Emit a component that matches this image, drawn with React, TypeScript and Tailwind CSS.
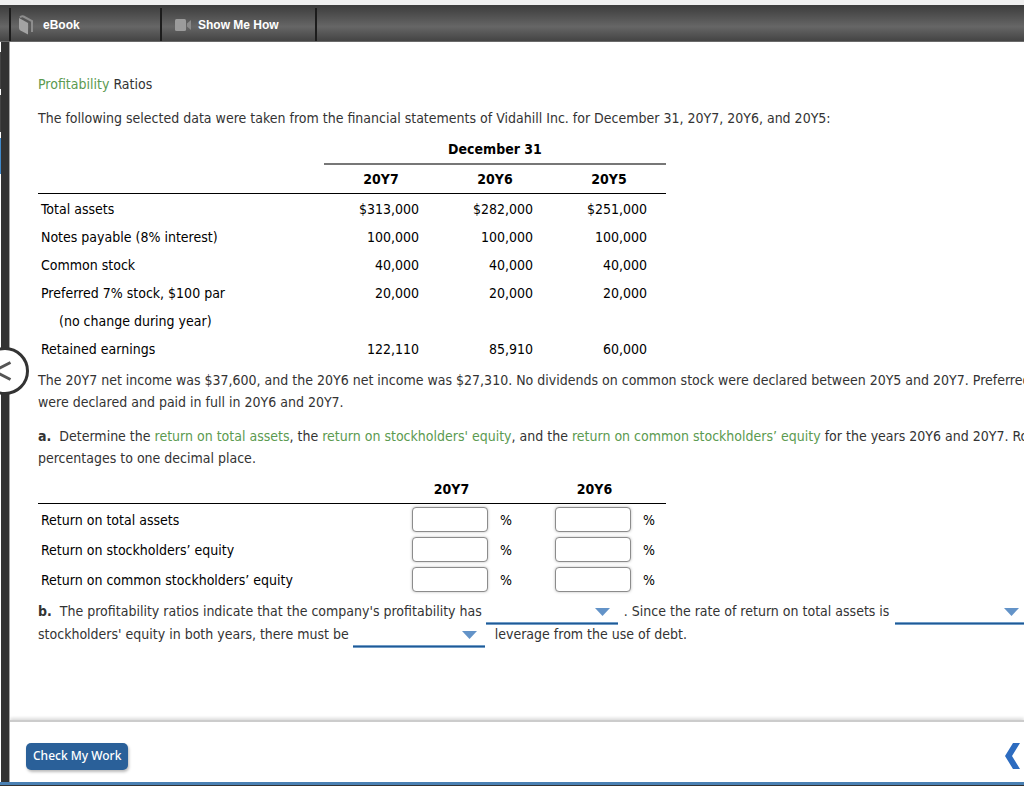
import { useState } from 'react';

const balances = [
  { label: 'Total assets', values: ['$313,000', '$282,000', '$251,000'] },
  { label: 'Notes payable (8% interest)', values: ['100,000', '100,000', '100,000'] },
  { label: 'Common stock', values: ['40,000', '40,000', '40,000'] },
  { label: 'Preferred 7% stock, $100 par', values: ['20,000', '20,000', '20,000'] },
  { label: '(no change during year)', values: ['', '', ''], indent: true },
  { label: 'Retained earnings', values: ['122,110', '85,910', '60,000'] },
];

const ratios = [
  'Return on total assets',
  'Return on stockholders’ equity',
  'Return on common stockholders’ equity',
];

interface BlankSelectProps {
  label: string;
  options: string[];
}

// Underlined drop-down that sits inside a sentence
function BlankSelect({ label, options }: BlankSelectProps) {
  const [value, setValue] = useState('');

  return (
    <span className="relative inline-flex h-[25px] w-33 shrink-0">
      <select
        aria-label={label}
        className="w-full appearance-none bg-transparent pr-8 outline-none"
        value={value}
        onChange={(e) => setValue(e.target.value)}
      >
        <option value=""></option>
        {options.map((option) => (
          <option key={option} value={option}>{option}</option>
        ))}
      </select>
      <svg className="pointer-events-none absolute top-2 right-2" width="15" height="8" viewBox="0 0 15 8">
        <path d="M0 0H15L7.5 8Z" fill="#6393c8" />
      </svg>
      <span className="pointer-events-none absolute inset-x-0 bottom-0 h-[3px] border-y border-[#6f9bc6] bg-[#1f5a96]" />
    </span>
  );
}

function Toolbar() {
  return (
    <header className="border-t-5 border-[#efefef]">
      <nav className="flex h-[37px] border-b border-[#6a6a6a] bg-linear-to-b from-[#3c3c3c] via-[#666666] via-60% to-[#444444] pl-[9px] font-['Liberation_Sans',sans-serif] text-xs font-bold text-white">
        <button type="button" className="mt-[3px] flex w-[151px] items-center gap-2 border-l-2 border-[#1c1c1c] pl-2">
          <svg width="16" height="20" viewBox="0 0 16 20">
            <path d="M0 3L9 8V19.5L1.5 15.5Q0 14.5 0 13Z" fill="#a3a3a3" />
            <path d="M1 2.5Q2.5 0.5 4.5 1.5L13 6V17" fill="none" stroke="#8d8d8d" strokeWidth="2" />
            <path d="M3 3.5L11 7.5V17" fill="none" stroke="#555555" strokeWidth="1" />
          </svg>
          eBook
        </button>
        <button type="button" className="mt-[3px] flex w-[155px] items-center gap-[6px] border-l-2 border-[#1c1c1c] pl-3">
          <svg width="18" height="12" viewBox="0 0 18 12">
            <rect x="1" y="0" width="11" height="12" rx="1.5" fill="#9b9b9b" />
            <path d="M17 1V11L13 7.5V4.5Z" fill="#8a8a8a" />
          </svg>
          Show Me How
        </button>
        <span className="mt-[3px] border-l-2 border-[#1c1c1c]" />
      </nav>
    </header>
  );
}

function SideRail() {
  return (
    <aside className="relative flex w-[10px] shrink-0">
      <div className="flex w-px flex-col gap-[6px] pt-[10px]">
        <span className="h-[37px] bg-[#444444]" />
        <span className="h-[37px] bg-[#444444]" />
        <span className="h-9 bg-[#3f88c9]" />
      </div>
      <div className="flex-1 border-r border-[#a5a5a5] bg-[#333333]" />
      <button
        type="button"
        aria-label="Open side panel"
        className="absolute top-[305px] -left-[19px] z-10 flex size-12 items-center justify-center rounded-full border-3 border-[#333333] bg-white"
      >
        <svg width="20" height="20" viewBox="0 0 20 20">
          <path d="M15.5 1.5L-1 10L15.5 18.5" fill="none" stroke="#555555" strokeWidth="3" />
        </svg>
      </button>
    </aside>
  );
}

export default function App() {
  const [answers, setAnswers] = useState<Record<string, string>>({});

  return (
    <div className="flex min-h-screen flex-col overflow-x-hidden bg-white font-['DejaVu_Sans_Condensed',Verdana,sans-serif] text-sm leading-[22px] text-[#333333]">
      <Toolbar />

      <div className="flex flex-1">
        <SideRail />
        <div className="flex min-w-0 flex-1 flex-col">
          <main className="flex-1 overflow-x-hidden pt-[31px] pb-8 pl-7 whitespace-nowrap">
            <h1>
              <a href="#profitability" className="text-[#5b9a50]">Profitability</a> Ratios
            </h1>
            <p className="mt-3">
              The following selected data were taken from the financial statements of Vidahill Inc. for December 31, 20Y7, 20Y6, and 20Y5:
            </p>

            <table className="mt-[6px] w-[628px] table-fixed border-collapse text-black">
              <colgroup>
                <col />
                <col className="w-[114px]" />
                <col className="w-[114px]" />
                <col className="w-[114px]" />
              </colgroup>
              <thead>
                <tr>
                  <td></td>
                  <th colSpan={3} className="border-b-2 border-[#777777] py-[3px]">December 31</th>
                </tr>
                <tr className="border-b border-black">
                  <td></td>
                  <th className="py-[3px]">20Y7</th>
                  <th className="py-[3px]">20Y6</th>
                  <th className="py-[3px]">20Y5</th>
                </tr>
              </thead>
              <tbody>
                {balances.map((row) => (
                  <tr key={row.label}>
                    <td className={row.indent ? 'pt-1 pb-[2px] pl-[21px]' : 'pt-1 pb-[2px] pl-[3px]'}>{row.label}</td>
                    {row.values.map((value, i) => (
                      <td key={i} className="pt-1 pr-[19px] pb-[2px] text-right">{value}</td>
                    ))}
                  </tr>
                ))}
              </tbody>
            </table>

            <p className="mt-[7px]">
              The 20Y7 net income was $37,600, and the 20Y6 net income was $27,310. No dividends on common stock were declared between 20Y5 and 20Y7. Preferred dividends
              <br />
              were declared and paid in full in 20Y6 and 20Y7.
            </p>

            <p className="mt-3">
              <b className="mr-2">a.</b>
              Determine the <a href="#rota" className="text-[#5b9a50]">return on total assets</a>, the{' '}
              <a href="#rose" className="text-[#5b9a50]">return on stockholders' equity</a>, and the{' '}
              <a href="#rocse" className="text-[#5b9a50]">return on common stockholders’ equity</a> for the years 20Y6 and 20Y7. Round
              <br />
              percentages to one decimal place.
            </p>

            <table className="mt-[6px] w-[628px] table-fixed border-collapse text-black">
              <colgroup>
                <col />
                <col className="w-[143px]" />
                <col className="w-[143px]" />
              </colgroup>
              <thead>
                <tr className="border-b border-black">
                  <td></td>
                  <th className="py-[3px]">20Y7</th>
                  <th className="py-[3px]">20Y6</th>
                </tr>
              </thead>
              <tbody>
                {ratios.map((ratio) => (
                  <tr key={ratio} className="h-[30px]">
                    <td className="pt-[2px] pl-[3px]">{ratio}</td>
                    {['20Y7', '20Y6'].map((year) => (
                      <td key={year} className="pt-[2px] pl-8">
                        <label className="flex items-center gap-3">
                          <input
                            type="text"
                            aria-label={`${ratio}, ${year}`}
                            className="h-[25px] w-19 rounded border border-[#8c8c8c] bg-white px-1 text-right shadow-[0_0_3px_#bbbbbb]"
                            value={answers[ratio + year] ?? ''}
                            onChange={(e) => setAnswers({ ...answers, [ratio + year]: e.target.value })}
                          />
                          %
                        </label>
                      </td>
                    ))}
                  </tr>
                ))}
              </tbody>
            </table>

            <div className="mt-[6px]">
              <div className="flex h-[23px]">
                <b className="mr-2">b.</b>
                <span className="mr-1">The profitability ratios indicate that the company's profitability has</span>
                <BlankSelect label="Change in profitability" options={['improved', 'declined']} />
                <span className="mx-[6px]">. Since the rate of return on total assets is</span>
                <BlankSelect label="Comparison of returns" options={['less than', 'greater than']} />
              </div>
              <div className="flex h-[23px]">
                <span className="mr-1">stockholders' equity in both years, there must be</span>
                <BlankSelect label="Kind of leverage" options={['positive', 'negative']} />
                <span className="ml-[10px]">leverage from the use of debt.</span>
              </div>
            </div>
          </main>

          <footer className="flex h-[62px] items-center justify-between border-t-2 border-[#cccccc] pt-2 pr-[3px] pl-4 shadow-[0_-2px_3px_#dddddd]">
            <button
              type="button"
              className="h-[27px] rounded-[5px] bg-[#2a6099] px-[7px] font-['Noto_Sans',Tahoma,sans-serif] text-xs leading-none font-medium text-white shadow-[1px_2px_3px_#bbbbbb]"
            >
              Check My Work
            </button>
            <button type="button" aria-label="Previous">
              <svg width="16" height="28" viewBox="0 0 16 28">
                <path d="M8 1H15L7 14L15 27H8L0 14Z" fill="#2d6cc0" />
              </svg>
            </button>
          </footer>
        </div>
      </div>

      <div className="h-1 border-b border-[#333333] bg-[#4a80b3]" />
    </div>
  );
}
